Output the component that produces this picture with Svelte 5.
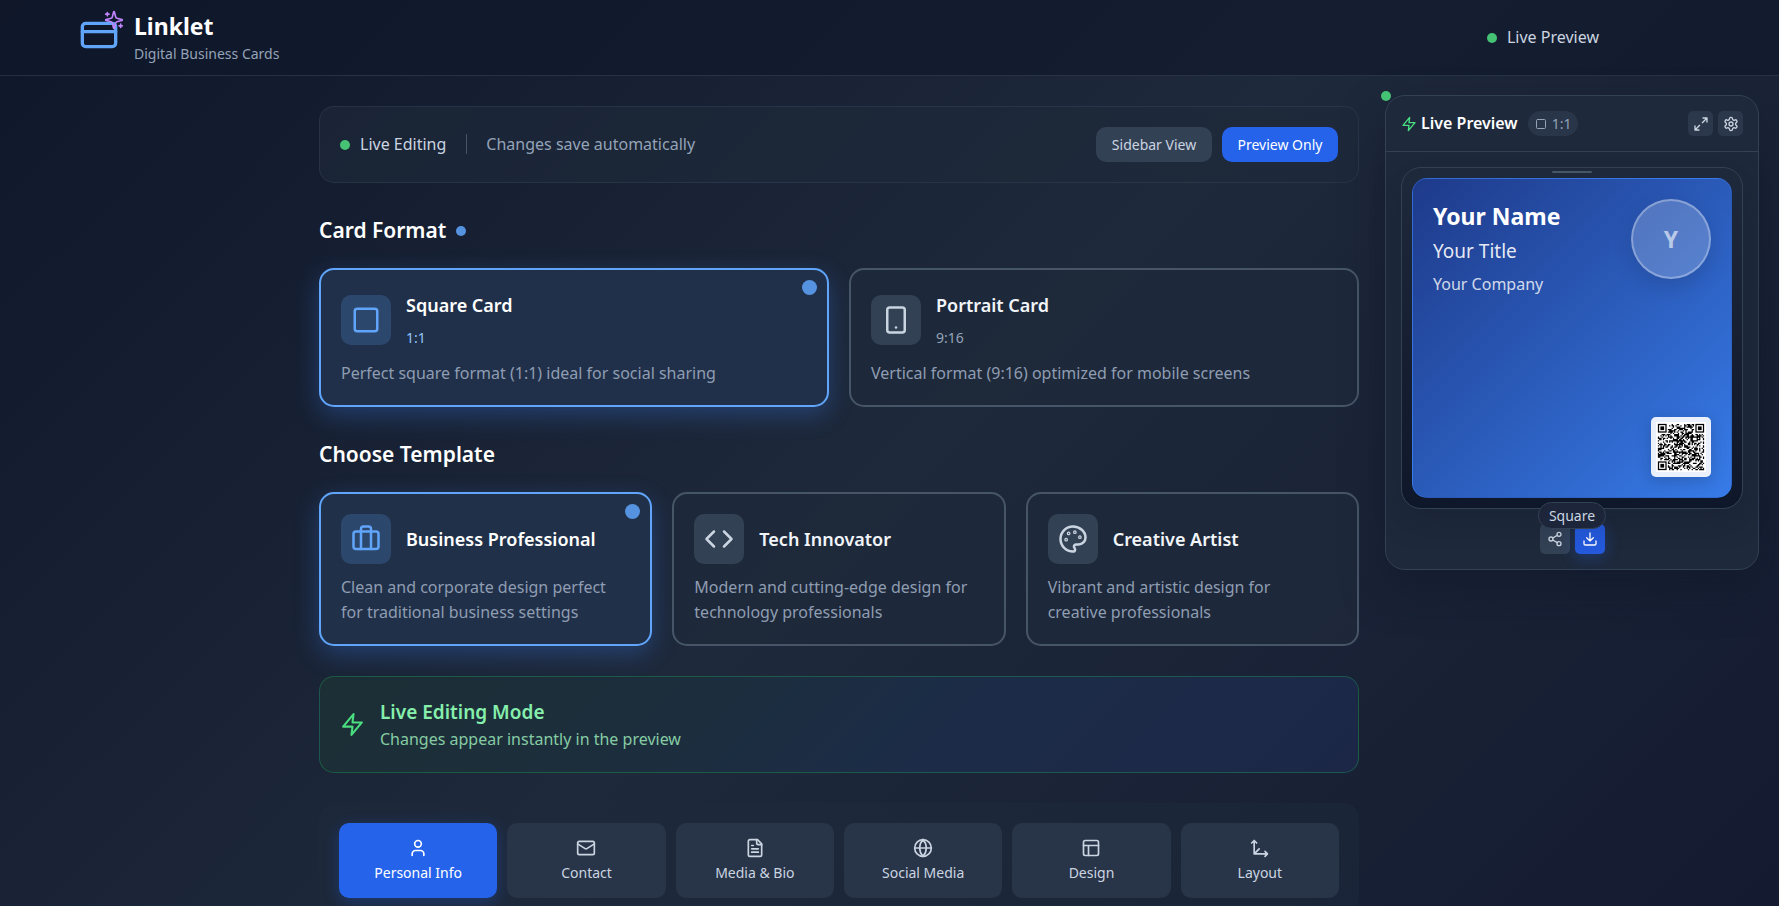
<script>
    const icons = {
        card: '<rect x="2" y="5" width="20" height="14" rx="2"/><path d="M2 10h20"/>',
        sparkles: '<path d="M9.94 15.5A2 2 0 0 0 8.5 14.06l-6.14-1.58a.5.5 0 0 1 0-.96L8.5 9.94A2 2 0 0 0 9.94 8.5l1.58-6.14a.5.5 0 0 1 .96 0l1.58 6.14a2 2 0 0 0 1.44 1.44l6.14 1.58a.5.5 0 0 1 0 .96l-6.14 1.58a2 2 0 0 0-1.44 1.44l-1.58 6.14a.5.5 0 0 1-.96 0z"/><path d="M20 17v4M22 19h-4M4 3v4M6 5H2"/>',
        zap: '<path d="M13 2 3 14h9l-1 8 10-12h-9l1-8z"/>',
        square: '<rect x="3" y="3" width="18" height="18" rx="2"/>',
        phone: '<rect x="5" y="2" width="14" height="20" rx="2"/><path d="M12 18h.01"/>',
        briefcase: '<path d="M16 20V4a2 2 0 0 0-2-2h-4a2 2 0 0 0-2 2v16"/><rect x="2" y="6" width="20" height="14" rx="2"/>',
        code: '<path d="m16 18 6-6-6-6M8 6l-6 6 6 6"/>',
        palette: '<circle cx="13.5" cy="6.5" r=".5"/><circle cx="17.5" cy="10.5" r=".5"/><circle cx="8.5" cy="7.5" r=".5"/><circle cx="6.5" cy="12.5" r=".5"/><path d="M12 2C6.5 2 2 6.5 2 12s4.5 10 10 10c.93 0 1.65-.75 1.65-1.69 0-.44-.18-.83-.44-1.12-.29-.29-.44-.65-.44-1.13a1.64 1.64 0 0 1 1.67-1.67h2c3.05 0 5.56-2.5 5.56-5.55C21.97 6.01 17.46 2 12 2z"/>',
        user: '<path d="M19 21v-2a4 4 0 0 0-4-4H9a4 4 0 0 0-4 4v2"/><circle cx="12" cy="7" r="4"/>',
        mail: '<rect x="2" y="4" width="20" height="16" rx="2"/><path d="m22 7-8.97 5.7a1.94 1.94 0 0 1-2.06 0L2 7"/>',
        file: '<path d="M15 2H6a2 2 0 0 0-2 2v16a2 2 0 0 0 2 2h12a2 2 0 0 0 2-2V7z"/><path d="M14 2v4a2 2 0 0 0 2 2h4M10 9H8M16 13H8M16 17H8"/>',
        globe: '<circle cx="12" cy="12" r="10"/><path d="M12 2a14.5 14.5 0 0 0 0 20 14.5 14.5 0 0 0 0-20M2 12h20"/>',
        panels: '<rect x="3" y="3" width="18" height="18" rx="2"/><path d="M3 9h18M9 21V9"/>',
        axes: '<path d="M5 3v16h16M5 19l6-6M2 6l3-3 3 3M18 16l3 3-3 3"/>',
        expand: '<path d="M15 3h6v6M9 21H3v-6M21 3l-7 7M3 21l7-7"/>',
        settings: '<path d="M12.22 2h-.44a2 2 0 0 0-2 2v.18a2 2 0 0 1-1 1.73l-.43.25a2 2 0 0 1-2 0l-.15-.08a2 2 0 0 0-2.73.73l-.22.38a2 2 0 0 0 .73 2.73l.15.1a2 2 0 0 1 1 1.72v.51a2 2 0 0 1-1 1.74l-.15.09a2 2 0 0 0-.73 2.73l.22.38a2 2 0 0 0 2.73.73l.15-.08a2 2 0 0 1 2 0l.43.25a2 2 0 0 1 1 1.73V20a2 2 0 0 0 2 2h.44a2 2 0 0 0 2-2v-.18a2 2 0 0 1 1-1.73l.43-.25a2 2 0 0 1 2 0l.15.08a2 2 0 0 0 2.73-.73l.22-.39a2 2 0 0 0-.73-2.73l-.15-.08a2 2 0 0 1-1-1.74v-.5a2 2 0 0 1 1-1.74l.15-.09a2 2 0 0 0 .73-2.73l-.22-.38a2 2 0 0 0-2.73-.73l-.15.08a2 2 0 0 1-2 0l-.43-.25a2 2 0 0 1-1-1.73V4a2 2 0 0 0-2-2z"/><circle cx="12" cy="12" r="3"/>',
        share: '<circle cx="18" cy="5" r="3"/><circle cx="6" cy="12" r="3"/><circle cx="18" cy="19" r="3"/><path d="m8.59 13.51 6.83 3.98M15.41 6.51l-6.82 3.98"/>',
        download: '<path d="M21 15v4a2 2 0 0 1-2 2H5a2 2 0 0 1-2-2v-4M7 10l5 5 5-5M12 15V3"/>'
    };

    const formats = [
        { id: 'square', name: 'Square Card', ratio: '1:1', icon: 'square', text: 'Perfect square format (1:1) ideal for social sharing' },
        { id: 'portrait', name: 'Portrait Card', ratio: '9:16', icon: 'phone', text: 'Vertical format (9:16) optimized for mobile screens' }
    ];

    const templates = [
        { id: 'business', name: 'Business Professional', icon: 'briefcase', text: 'Clean and corporate design perfect for traditional business settings' },
        { id: 'tech', name: 'Tech Innovator', icon: 'code', text: 'Modern and cutting-edge design for technology professionals' },
        { id: 'creative', name: 'Creative Artist', icon: 'palette', text: 'Vibrant and artistic design for creative professionals' }
    ];

    const tabs = [
        { id: 'personal', label: 'Personal Info', icon: 'user' },
        { id: 'contact', label: 'Contact', icon: 'mail' },
        { id: 'media', label: 'Media & Bio', icon: 'file' },
        { id: 'social', label: 'Social Media', icon: 'globe' },
        { id: 'design', label: 'Design', icon: 'panels' },
        { id: 'layout', label: 'Layout', icon: 'axes' }
    ];

    let format = $state('square');
    let template = $state('business');
    let tab = $state('personal');

    const QR = 37;

    // one path for all dark modules, finder squares in three corners
    function qrPath() {
        let seed = 4711;
        let d = '';
        for (let y = 0; y < QR; y++) {
            for (let x = 0; x < QR; x++) {
                seed = (seed * 1103515245 + 12345) % 2147483648;
                const corner = (x < 8 && y < 8) || (x > QR - 9 && y < 8) || (x < 8 && y > QR - 9);
                if (!corner && seed / 2147483648 > 0.5) d += `M${x} ${y}h1v1h-1z`;
            }
        }
        return d;
    }

    const qr = qrPath();
    const finders = [[0, 0], [QR - 7, 0], [0, QR - 7]];
</script>

{#snippet icon(name, size)}
    <svg class="icon" width={size} height={size} viewBox="0 0 24 24" aria-hidden="true">{@html icons[name]}</svg>
{/snippet}

{#snippet option(item, active, select)}
    <button class="option" class:active aria-pressed={active} onclick={select}>
        <span class="option-head" class:tall={item.ratio}>
            <span class="option-icon">{@render icon(item.icon, 30)}</span>
            <span class="option-title">
                <span class="option-name">{item.name}</span>
                {#if item.ratio}<span class="option-ratio">{item.ratio}</span>{/if}
            </span>
        </span>
        <span class="option-text">{item.text}</span>
        {#if active}<span class="option-dot"></span>{/if}
    </button>
{/snippet}

<div class="page">
    <header class="top">
        <div class="brand">
            <span class="logo">
                {@render icon('card', 40)}
                <span class="sparkles">{@render icon('sparkles', 20)}</span>
            </span>
            <div>
                <h1>Linklet</h1>
                <p class="tagline">Digital Business Cards</p>
            </div>
        </div>
        <div class="status"><span class="dot green"></span>Live Preview</div>
    </header>

    <div class="layout">
        <main>
            <div class="toolbar">
                <div class="status"><span class="dot green"></span>Live Editing</div>
                <span class="autosave">Changes save automatically</span>
                <div class="views">
                    <button class="view">Sidebar View</button>
                    <button class="view primary">Preview Only</button>
                </div>
            </div>

            <section>
                <h2>Card Format <span class="dot blue"></span></h2>
                <div class="options two">
                    {#each formats as item}
                        {@render option(item, format === item.id, () => (format = item.id))}
                    {/each}
                </div>
            </section>

            <section>
                <h2>Choose Template</h2>
                <div class="options three">
                    {#each templates as item}
                        {@render option(item, template === item.id, () => (template = item.id))}
                    {/each}
                </div>
            </section>

            <div class="banner">
                {@render icon('zap', 25)}
                <div>
                    <h3>Live Editing Mode</h3>
                    <p>Changes appear instantly in the preview</p>
                </div>
            </div>

            <nav class="tabs">
                {#each tabs as item}
                    <button class="tab" class:active={tab === item.id} onclick={() => (tab = item.id)}>
                        {@render icon(item.icon, 20)}
                        {item.label}
                    </button>
                {/each}
            </nav>
        </main>

        <aside class="preview">
            <span class="dot green pulse"></span>
            <div class="preview-head">
                <span class="zap">{@render icon('zap', 16)}</span>
                <h2>Live Preview</h2>
                <span class="chip">{@render icon('square', 12)}1:1</span>
                <div class="tools">
                    <button class="tool" aria-label="Expand preview">{@render icon('expand', 16)}</button>
                    <button class="tool" aria-label="Preview settings">{@render icon('settings', 16)}</button>
                </div>
            </div>
            <div class="preview-body">
                <div class="frame">
                    <span class="notch"></span>
                    <div class="card">
                        <div class="card-top">
                            <div>
                                <div class="name">Your Name</div>
                                <div class="role">Your Title</div>
                                <div class="company">Your Company</div>
                            </div>
                            <div class="avatar">Y</div>
                        </div>
                        <div class="qr">
                            <svg viewBox="-1.5 -1.5 40 40" width="50" height="50" role="img" aria-label="QR code">
                                <rect x="-1.5" y="-1.5" width="40" height="40" fill="#fff" />
                                <path d={qr} />
                                {#each finders as [x, y]}
                                    <rect x={x + 0.5} y={y + 0.5} width="6" height="6" fill="none" stroke="#000" />
                                    <rect x={x + 2} y={y + 2} width="3" height="3" />
                                {/each}
                            </svg>
                        </div>
                    </div>
                    <span class="badge">Square</span>
                </div>
                <div class="actions">
                    <button class="action" aria-label="Share">{@render icon('share', 16)}</button>
                    <button class="action primary" aria-label="Download">{@render icon('download', 16)}</button>
                </div>
            </div>
        </aside>
    </div>
</div>

<style>
    :global(html) {
        scrollbar-width: none;
    }

    :global(body) {
        background: #0f172a;
    }

    .page {
        min-height: 100vh;
        background: linear-gradient(135deg, #0f172a 0%, #1e293b 50%, #141a30 100%);
        color: #fff;
        font-family: 'Segoe UI', 'Noto Sans', sans-serif;
        font-size: 16px;
        line-height: 25px;
    }

    h1, h2, h3, p {
        margin: 0;
    }

    button {
        font: inherit;
        color: inherit;
        border: none;
        cursor: pointer;
    }

    .icon {
        display: block;
        flex: none;
        fill: none;
        stroke: currentColor;
        stroke-width: 2;
        stroke-linecap: round;
        stroke-linejoin: round;
    }

    .dot {
        width: 10px;
        height: 10px;
        border-radius: 50%;
    }

    .green {
        background: #45c274;
    }

    .blue {
        background: #5593e0;
    }

    .top {
        display: flex;
        justify-content: space-between;
        align-items: center;
        padding: 10px 180px 10px 79px;
        border-bottom: 1px solid rgba(71, 85, 105, 0.4);
        background: rgba(15, 23, 42, 0.6);
    }

    .brand {
        display: flex;
        align-items: flex-start;
        gap: 15px;
    }

    .logo {
        position: relative;
        padding-top: 5px;
        color: #60a5fa;
    }

    .sparkles {
        position: absolute;
        top: 0;
        right: -5px;
        color: #c084fc;
    }

    h1 {
        font-size: 23px;
        line-height: 33px;
        font-weight: 700;
    }

    .tagline {
        font-size: 14px;
        line-height: 22px;
        color: #94a3b8;
    }

    .status {
        display: flex;
        align-items: center;
        gap: 10px;
        color: #cbd5e1;
    }

    .layout {
        display: grid;
        grid-template-columns: minmax(0, 1fr) 374px;
        align-items: start;
        gap: 26px;
        padding: 0 20px 30px;
    }

    main {
        display: flex;
        flex-direction: column;
        gap: 30px;
        width: 100%;
        max-width: 1040px;
        margin-top: 30px;
        justify-self: end;
    }

    .toolbar {
        display: flex;
        align-items: center;
        gap: 20px;
        padding: 20px;
        border: 1px solid rgba(71, 85, 105, 0.3);
        border-radius: 15px;
        background: rgba(30, 41, 59, 0.6);
    }

    .autosave {
        position: relative;
        padding-left: 20px;
        color: #94a3b8;
    }

    .autosave::before {
        content: '';
        position: absolute;
        left: 0;
        top: 2px;
        width: 1px;
        height: 20px;
        background: #475569;
    }

    .views {
        display: flex;
        gap: 10px;
        margin-left: auto;
    }

    .view {
        width: 116px;
        padding: 7px 0;
        border-radius: 10px;
        background: #334155;
        color: #cbd5e1;
        font-size: 14px;
        line-height: 21px;
    }

    .view.primary {
        background: #2563eb;
        color: #fff;
    }

    section h2 {
        display: flex;
        align-items: center;
        gap: 10px;
        margin-bottom: 20px;
        font-size: 21px;
        line-height: 35px;
        font-weight: 600;
    }

    .options {
        display: grid;
        gap: 20px;
    }

    .two {
        grid-template-columns: repeat(2, 1fr);
    }

    .three {
        grid-template-columns: repeat(3, 1fr);
    }

    .option {
        position: relative;
        padding: 20px 20px 19px;
        border: 2px solid #475569;
        border-radius: 15px;
        background: rgba(30, 41, 59, 0.8);
        text-align: left;
    }

    .option.active {
        border-color: #60a5fa;
        background: linear-gradient(rgba(59, 130, 246, 0.08), rgba(59, 130, 246, 0.08)), #1e293b;
        box-shadow: 0 8px 25px rgba(59, 130, 246, 0.3);
    }

    .option-head {
        display: flex;
        align-items: center;
        gap: 15px;
        min-height: 50px;
        margin-bottom: 11px;
    }

    .option-head.tall {
        min-height: 60px;
    }

    .option-icon {
        display: grid;
        place-items: center;
        width: 50px;
        height: 50px;
        border-radius: 10px;
        background: #334155;
        color: #cbd5e1;
    }

    .active .option-icon {
        background: rgba(96, 165, 250, 0.2);
        color: #60a5fa;
    }

    .option-title {
        display: flex;
        flex-direction: column;
        gap: 5px;
    }

    .option-name {
        font-size: 18px;
        line-height: 30px;
        font-weight: 600;
        color: #f1f5f9;
    }

    .option-ratio {
        font-size: 14px;
        color: #94a3b8;
    }

    .active .option-name {
        color: #fff;
    }

    .active .option-ratio {
        color: #93c5fd;
    }

    .option-text {
        display: block;
        padding-right: 5px;
        color: #8f9db2;
    }

    .option-dot {
        position: absolute;
        top: 10px;
        right: 10px;
        width: 15px;
        height: 15px;
        border-radius: 50%;
        background: #5593e0;
    }

    .banner {
        display: flex;
        align-items: center;
        gap: 15px;
        padding: 20px;
        border: 1px solid rgba(34, 197, 94, 0.3);
        border-radius: 15px;
        background: linear-gradient(135deg, #1c2f35 0%, #1c2e3d 35%, #1c2c48 60%, #1c2748 100%);
        color: #4ade80;
    }

    .banner h3 {
        font-size: 19px;
        line-height: 30px;
        font-weight: 600;
        color: #86efac;
    }

    .banner p {
        color: #86cba4;
    }

    .tabs {
        display: grid;
        grid-template-columns: repeat(6, 1fr);
        gap: 10px;
        padding: 20px;
        border-radius: 15px;
        background: rgba(30, 41, 59, 0.5);
    }

    .tab {
        display: flex;
        flex-direction: column;
        align-items: center;
        gap: 5px;
        padding: 15px 10px;
        border-radius: 10px;
        background: #283447;
        color: #cbd5e1;
        font-size: 14px;
        line-height: 20px;
    }

    .tab.active {
        background: #2563eb;
        box-shadow: 0 4px 15px rgba(37, 99, 235, 0.3);
        color: #fff;
    }

    .preview {
        position: relative;
        margin-top: 19px;
        border: 1px solid #334155;
        border-radius: 20px;
        background: #1e293b;
        box-shadow: 0 20px 40px rgba(15, 23, 42, 0.5);
    }

    .pulse {
        position: absolute;
        top: -5px;
        left: -5px;
    }

    .preview-head {
        display: flex;
        align-items: center;
        padding: 15px;
        border-bottom: 1px solid #334155;
    }

    .zap {
        color: #4ade80;
    }

    .preview-head h2 {
        margin: 0 10px 0 4px;
        font-size: 16px;
        line-height: 25px;
        font-weight: 600;
    }

    .chip {
        display: flex;
        align-items: center;
        gap: 5px;
        padding: 0 7px;
        border-radius: 15px;
        background: #293548;
        color: #94a3b8;
        font-size: 14px;
    }

    .tools {
        display: flex;
        gap: 5px;
        margin-left: auto;
    }

    .tool {
        display: grid;
        place-items: center;
        width: 25px;
        height: 25px;
        padding: 0;
        border-radius: 5px;
        background: #2b374a;
        color: #cbd5e1;
    }

    .preview-body {
        padding: 15px;
    }

    .frame {
        position: relative;
        padding: 10px;
        border: 1px solid #334155;
        border-radius: 20px;
        background: linear-gradient(180deg, #1e293b, #0f172a);
        box-shadow: 0 10px 30px rgba(15, 23, 42, 0.3);
    }

    .notch {
        position: absolute;
        top: 3px;
        left: 50%;
        width: 40px;
        height: 2px;
        margin-left: -20px;
        border-radius: 2px;
        background: #475569;
    }

    .card {
        display: flex;
        flex-direction: column;
        justify-content: space-between;
        box-sizing: border-box;
        aspect-ratio: 1;
        padding: 20px;
        border: 1px solid rgba(59, 130, 246, 0.4);
        border-radius: 15px;
        background: linear-gradient(135deg, #1e3a8a, #377be8);
    }

    .card-top {
        display: flex;
        justify-content: space-between;
    }

    .name {
        font-size: 23px;
        line-height: 35px;
        font-weight: 700;
    }

    .role {
        font-size: 19px;
        line-height: 35px;
        color: rgba(255, 255, 255, 0.9);
    }

    .company {
        line-height: 30px;
        color: rgba(255, 255, 255, 0.8);
    }

    .avatar {
        display: grid;
        place-items: center;
        box-sizing: border-box;
        width: 80px;
        height: 80px;
        border: 2px solid rgba(255, 255, 255, 0.3);
        border-radius: 50%;
        background: rgba(255, 255, 255, 0.2);
        box-shadow: 0 8px 20px rgba(15, 23, 42, 0.15);
        color: rgba(255, 255, 255, 0.6);
        font-size: 23px;
        font-weight: 700;
    }

    .qr {
        align-self: flex-end;
        padding: 5px;
        border-radius: 5px;
        background: rgba(255, 255, 255, 0.9);
        box-shadow: 0 4px 15px rgba(15, 23, 42, 0.2);
    }

    .qr svg {
        display: block;
    }

    .badge {
        position: absolute;
        bottom: -21px;
        left: 50%;
        transform: translateX(-50%);
        padding: 0 10px;
        border: 1px solid #334155;
        border-radius: 15px;
        background: #1c2539;
        color: #cbd5e1;
        font-size: 14px;
    }

    .actions {
        display: flex;
        justify-content: center;
        gap: 5px;
        margin-top: 15px;
    }

    .action {
        display: grid;
        place-items: center;
        width: 30px;
        height: 30px;
        padding: 0;
        border-radius: 5px;
        background: #334155;
        color: #cbd5e1;
    }

    .action.primary {
        background: #2459dc;
        box-shadow: 0 4px 15px rgba(37, 99, 235, 0.3);
        color: #fff;
    }
</style>
